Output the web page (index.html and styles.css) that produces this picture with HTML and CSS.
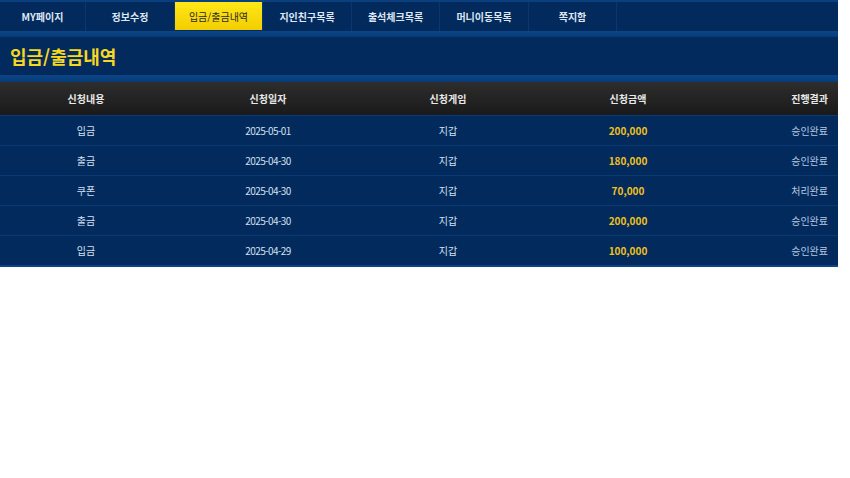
FILE: index.html
```html
<!DOCTYPE html>
<html lang="ko">

<head>
    <meta charset="UTF-8">
    <meta name="viewport" content="width=device-width, initial-scale=1.0">
    <link rel="stylesheet" href="styles.css">
    <title>입금/출금내역</title>
</head>

<body>
    <!-- 마이페이지 컨테이너 -->
    <div class="mypage">
        <!-- 상단 메뉴 -->
        <ul class="tabMenu">
            <li>MY페이지</li>
            <li>정보수정</li>
            <li class="activo">입금/출금내역</li>
            <li>지인친구목록</li>
            <li>출석체크목록</li>
            <li>머니이동목록</li>
            <li>쪽지함</li>
        </ul>
        <div class="franja"></div>
        <!-- 제목 -->
        <h1 class="tituloSeccion">입금/출금내역</h1>
        <div class="franja franjaBaja"></div>
        <!-- 내역 테이블 -->
        <div class="tabla">
            <div class="fila cabecera">
                <span>신청내용</span>
                <span>신청일자</span>
                <span>신청게임</span>
                <span>신청금액</span>
                <span class="resultado">진행결과</span>
            </div>
            <div class="fila">
                <span>입금</span>
                <span class="fecha">2025-05-01</span>
                <span>지갑</span>
                <span class="monto">200,000</span>
                <span class="resultado">승인완료</span>
            </div>
            <div class="fila">
                <span>출금</span>
                <span class="fecha">2025-04-30</span>
                <span>지갑</span>
                <span class="monto">180,000</span>
                <span class="resultado">승인완료</span>
            </div>
            <div class="fila">
                <span>쿠폰</span>
                <span class="fecha">2025-04-30</span>
                <span>지갑</span>
                <span class="monto">70,000</span>
                <span class="resultado">처리완료</span>
            </div>
            <div class="fila">
                <span>출금</span>
                <span class="fecha">2025-04-30</span>
                <span>지갑</span>
                <span class="monto">200,000</span>
                <span class="resultado">승인완료</span>
            </div>
            <div class="fila">
                <span>입금</span>
                <span class="fecha">2025-04-29</span>
                <span>지갑</span>
                <span class="monto">100,000</span>
                <span class="resultado">승인완료</span>
            </div>
        </div>
    </div>
</body>

</html>
```

FILE: styles.css
```css
body {
    margin: 0px;
    background-color: #ffffff;
    font-family: "Noto Sans CJK KR", "Noto Sans", sans-serif;
}

.mypage {
    width: 838px;
    background-color: #022a5c;
    border-bottom: 2px solid #0b4588;
}

.tabMenu {
    list-style: none;
    margin: 0px;
    padding: 0px;
    display: flex;
    height: 31px;
    background-color: #022a5c;
    border-top: 2px solid #0a3f80;
    box-sizing: border-box;
}

.tabMenu li {
    width: 88px;
    display: flex;
    align-items: center;
    justify-content: center;
    font-size: 10px;
    font-weight: bold;
    color: #dfe7f3;
    border-right: 1px solid #0b3670;
    box-sizing: border-box;
}

.tabMenu li:first-child {
    width: 86px;
}

.tabMenu li:nth-child(2n) {
    width: 89px;
}

.tabMenu .activo {
    background: linear-gradient(#ffe818, #f2cd00);
    color: #2a2a2a;
    font-weight: normal;
    margin-bottom: 1px;
}

.franja {
    height: 6px;
    background: linear-gradient(#0b4688, #073b77);
}

.franjaBaja {
    height: 7px;
}

.tituloSeccion {
    margin: 0px;
    height: 38px;
    padding-left: 10px;
    display: flex;
    align-items: center;
    font-size: 18px;
    font-weight: bold;
    color: #f7d820;
    background-color: #022a5c;
}

.fila {
    display: grid;
    grid-template-columns: 172px 192px 168px 192px 1fr;
    height: 30px;
    align-items: center;
    font-size: 10px;
    color: #d4e0f0;
    border-top: 1px solid #0a3a74;
    box-sizing: border-box;
}

.fila span {
    text-align: center;
}

.fila .fecha {
    letter-spacing: -0.6px;
}

.fila .resultado {
    text-align: right;
    padding-right: 10px;
    color: #b7c9e3;
}

.cabecera {
    height: 33px;
    border-top: none;
    background: linear-gradient(#2e2d2d, #1b1a1a);
    font-weight: bold;
    color: #e8e8e8;
}

.cabecera .resultado {
    color: #e8e8e8;
}

.monto {
    color: #f2c21c;
    font-weight: bold;
}
```
